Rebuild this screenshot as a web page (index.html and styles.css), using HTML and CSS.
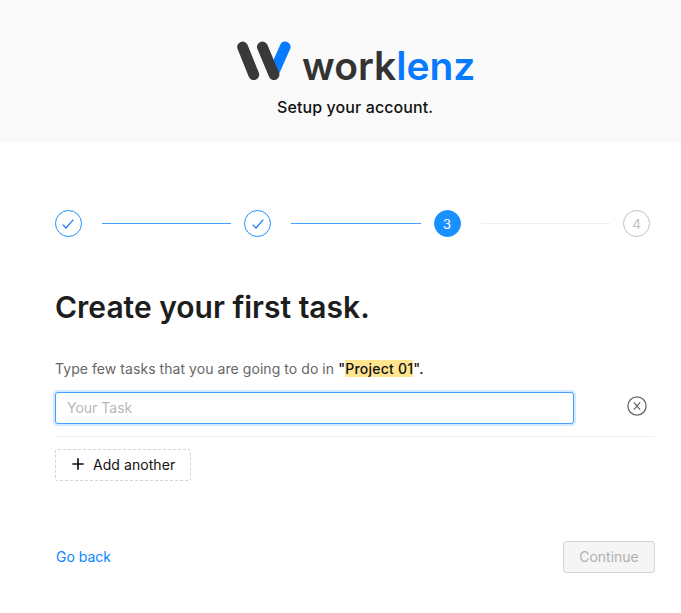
FILE: index.html
```
<!DOCTYPE html>
<html lang="en">
<head>
<meta charset="utf-8">
<title>Worklenz - Setup your account</title>
<link rel="stylesheet" href="styles.css">
</head>
<body>
<header class="header">
  <div class="logo">
    <svg class="logo-mark" width="56" height="42" viewBox="0 0 56 42" fill="none" stroke-width="10.8" stroke-linecap="round">
      <path d="M49.2 6.9 38 32" stroke="#077bff"/>
      <path d="M6.6 6.9 17.8 34.7M26.4 6.9 38 34.7" stroke="#393939"/>
    </svg>
    <span class="logo-text">work<span class="logo-accent">lenz</span></span>
  </div>
  <p class="subtitle">Setup your account.</p>
</header>
<main class="content">
  <div class="steps">
    <span class="step"><svg width="14" height="14" viewBox="0 0 14 14"><path d="M1.6 7.6 5 11 12.3 2.7"/></svg></span>
    <span class="tail"></span>
    <span class="step"><svg width="14" height="14" viewBox="0 0 14 14"><path d="M1.6 7.6 5 11 12.3 2.7"/></svg></span>
    <span class="tail"></span>
    <span class="step step-active">3</span>
    <span class="tail tail-wait"></span>
    <span class="step step-wait">4</span>
  </div>
  <h1 class="title">Create your first task.</h1>
  <p class="hint">Type few tasks that you are going to do in <span class="project">"<mark>Project 01</mark>".</span></p>
  <div class="task-row">
    <input class="task-input" type="text" placeholder="Your Task">
    <button class="remove" type="button" aria-label="Remove task">
      <svg width="20" height="20" viewBox="0 0 20 20" fill="none" stroke="#666"><circle cx="10" cy="10" r="9.1" stroke-width="1.3"/><path d="M6.9 6.4 13.1 13.6M13.1 6.4 6.9 13.6" stroke-width="1.3"/></svg>
    </button>
  </div>
  <button class="add" type="button">
    <svg width="12" height="12" viewBox="0 0 12 12" stroke="#111" stroke-width="1.7"><path d="M6 .3V11.7M.3 6H11.7"/></svg>
    <span>Add another</span>
  </button>
  <div class="actions">
    <a class="back" href="#">Go back</a>
    <button class="continue" type="button" disabled>Continue</button>
  </div>
</main>
</body>
</html>
```
FILE: styles.css
```
* { box-sizing: border-box; }
body {
  margin: 0;
  background: #fff;
  color: #111;
  font-family: Inter, "Liberation Sans", sans-serif;
  font-size: 14px;
}
button { font: inherit; padding: 0; }
h1, p { margin: 0; }
.header {
  height: 143px;
  padding: 40px 0 0 236px;
  background: #fafafa;
}
.logo { display: flex; height: 48px; }
.logo-text {
  margin: 2px 0 0 10px;
  font-size: 39px;
  line-height: 48px;
  font-weight: 600;
  color: #333;
}
.logo-accent { color: #077bff; }
.subtitle {
  margin: 9px 0 0 41px;
  font-size: 16px;
  line-height: 20px;
  font-weight: 500;
  letter-spacing: 0.1px;
}
.content { padding: 66.5px 26px 0 55px; }
.steps {
  display: flex;
  align-items: center;
  margin: 0 5px 0 -0.5px;
}
.step {
  display: flex;
  flex: none;
  align-items: center;
  justify-content: center;
  width: 27px;
  height: 27px;
  border: 1px solid #1890ff;
  border-radius: 50%;
  font-size: 13.5px;
  line-height: 20px;
  padding-top: 1px;
}
.step svg { fill: none; stroke: #1677ff; stroke-width: 1.2; }
.step-active { background: #1890ff; color: #fff; padding-top: 2px; }
.step-wait { border-color: #bfbfbf; color: #bfbfbf; padding-top: 2px; }
.tail {
  flex: 1;
  height: 1px;
  margin: 0 13px 0 20px;
  background: #40a0ff;
}
.tail-wait { background: #f0f0f0; }
.title {
  margin-top: 50.5px;
  font-size: 30px;
  line-height: 40px;
  font-weight: 600;
  color: #1d1d1d;
}
.hint {
  margin-top: 32px;
  line-height: 20px;
  letter-spacing: 0.06px;
  color: #666;
}
.project { font-weight: 500; color: #111; letter-spacing: 0.22px; }
mark { background: #ffe58f; color: inherit; }
.task-row {
  display: flex;
  align-items: center;
  height: 58px;
  padding: 0 8px 0 0;
  justify-content: space-between;
  border-bottom: 1px solid #f0f0f0;
}
.task-input {
  width: 519px;
  height: 32px;
  padding: 0 11px;
  border: 1px solid #40a0ff;
  border-radius: 3px;
  outline: none;
  box-shadow: 0 0 0 2px #d4eaff;
  font: 14px Inter, "Liberation Sans", sans-serif;
}
.task-input::placeholder { color: #b8b8b8; }
.remove {
  display: flex;
  margin-top: -3px;
  border: 0;
  background: none;
}
.add {
  display: flex;
  align-items: center;
  gap: 9px;
  width: 136px;
  height: 32px;
  margin-top: 12px;
  padding: 0 0 2px 16px;
  border: 1px dashed #d4d4d4;
  border-radius: 3px;
  background: #fff;
  color: #111;
  letter-spacing: 0.06px;
}
.actions {
  display: flex;
  align-items: center;
  justify-content: space-between;
  margin-top: 60px;
  padding-left: 1px;
}
.back { padding-bottom: 2px; color: #0b85ff; text-decoration: none; }
.continue {
  width: 92px;
  height: 32px;
  padding-bottom: 2px;
  border: 1px solid #d4d4d4;
  border-radius: 3px;
  background: #f5f5f5;
  color: #b0b0b0;
}
```
